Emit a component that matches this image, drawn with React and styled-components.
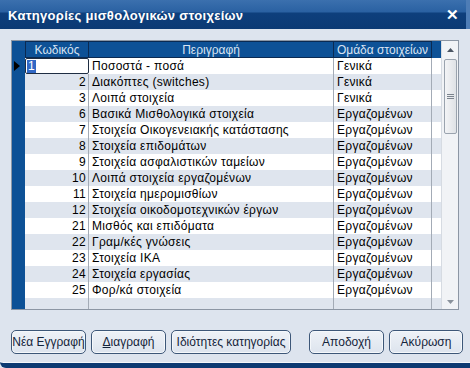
import React from "react";
import styled, { createGlobalStyle } from "styled-components";

const Global = createGlobalStyle`
  html, body { margin: 0; padding: 0; overflow: hidden; background: #dde4ee; }
  * { box-sizing: border-box; }
`;

const rows = [
  [1, "Ποσοστά - ποσά", "Γενικά"],
  [2, "Διακόπτες (switches)", "Γενικά"],
  [3, "Λοιπά στοιχεία", "Γενικά"],
  [6, "Βασικά Μισθολογικά στοιχεία", "Εργαζομένων"],
  [7, "Στοιχεία Οικογενειακής κατάστασης", "Εργαζομένων"],
  [8, "Στοιχεία επιδομάτων", "Εργαζομένων"],
  [9, "Στοιχεία ασφαλιστικών ταμείων", "Εργαζομένων"],
  [10, "Λοιπά στοιχεία εργαζομένων", "Εργαζομένων"],
  [11, "Στοιχεία ημερομισθίων", "Εργαζομένων"],
  [12, "Στοιχεία οικοδομοτεχνικών έργων", "Εργαζομένων"],
  [21, "Μισθός και επιδόματα", "Εργαζομένων"],
  [22, "Γραμ/κές γνώσεις", "Εργαζομένων"],
  [23, "Στοιχεία ΙΚΑ", "Εργαζομένων"],
  [24, "Στοιχεία εργασίας", "Εργαζομένων"],
  [25, "Φορ/κά στοιχεία", "Εργαζομένων"],
];

const COLS = "13px 64px 245px 98px 9px";
const FONT = `"Liberation Sans", Arial, sans-serif`;

const Window = styled.div`
  width: 470px;
  height: 368px;
  display: flex;
  flex-direction: column;
  background: #dde4ee;
  border-bottom: 5px solid #0c3a72;
  border-bottom-left-radius: 6px;
  box-shadow: inset 0 -1px 0 #f4f7fb;
  font-family: ${FONT};
  overflow: hidden;
`;

const TitleBar = styled.div`
  height: 29px;
  flex: none;
  display: flex;
  align-items: center;
  justify-content: space-between;
  padding: 0 7px 0 8px;
  background: linear-gradient(
    to bottom,
    #3b70ae 0px,
    #2a61a2 12px,
    #0e3f7c 13px,
    #0b3a74 29px
  );
  border-right: 4px solid #4e7db6;
  color: #ffffff;
  font-weight: bold;
  font-size: 13px;
  letter-spacing: 0.3px;
`;

const Title = styled.span`
  padding-top: 2px;
`;

const Close = styled.span`
  font-size: 15px;
  font-weight: bold;
  line-height: 1;
`;

const Body = styled.div`
  flex: 1;
  display: flex;
  flex-direction: column;
  padding: 11px 11px 0 11px;
`;

const Grid = styled.div`
  width: 448px;
  height: 270px;
  border: 1px solid #8c96a4;
  display: flex;
  background: #ffffff;
`;

const Table = styled.div`
  flex: 1;
  display: flex;
  flex-direction: column;
  overflow: hidden;
`;

const Row = styled.div`
  display: grid;
  grid-template-columns: ${COLS};
  height: ${(p) => (p.$header ? 17 : 16)}px;
  flex: none;
  background: ${(p) => (p.$header ? "#0d5196" : p.$alt ? "#dfe5ee" : "#ffffff")};
  font-size: 12px;
  letter-spacing: ${(p) => (p.$header ? 0 : 0.3)}px;
  line-height: 16px;
`;

const Indicator = styled.div`
  background: #0d5196;
  position: relative;
`;

const Arrow = styled.div`
  position: absolute;
  left: 2px;
  top: 3px;
  width: 0;
  height: 0;
  border-top: 5px solid transparent;
  border-bottom: 5px solid transparent;
  border-left: 6px solid #000;
`;

const HeadCell = styled.div`
  color: #d9e4f3;
  text-align: center;
  border-left: ${(p) => (p.$first ? "1px solid #0a2a52" : "none")};
  border-right: 1px solid #0a2a52;
  border-top: 1px solid #0a2a52;
  border-bottom: 1px solid #0a2a52;
  white-space: nowrap;
  overflow: hidden;
`;

const HeadFill = styled.div`
  background: #0d5196;
`;

const Cell = styled.div`
  color: #000;
  text-align: ${(p) => (p.$right ? "right" : "left")};
  padding: ${(p) => (p.$right ? "0 2px 0 0" : "0 0 0 3px")};
  border-right: 1px solid #a3abb6;
  white-space: nowrap;
  overflow: hidden;
`;

const EditCell = styled.div`
  background: #ffffff;
  border: 1px solid #1e2d42;
  border-radius: 2px;
  padding: 0 0 0 1px;
  display: flex;
  align-items: center;
`;

const Sel = styled.span`
  background: #3168c5;
  color: #fff;
  padding: 0 1px;
  line-height: 13px;
`;

const Filler = styled.div``;

const EmptyRow = styled(Row)`
  height: 11px;
  background: #dfe5ee;
`;

const Rest = styled.div`
  flex: 1;
  background: linear-gradient(to right, #0d5196 13px, #ffffff 13px);
`;

const Scroll = styled.div`
  width: 17px;
  flex: none;
  background: #f1f3f6;
  border-left: 1px solid #d6dbe2;
  display: flex;
  flex-direction: column;
  align-items: center;
  padding-top: 1px;
`;

const ArrowBtn = styled.div`
  width: 15px;
  height: 15px;
  display: flex;
  align-items: center;
  justify-content: center;
`;

const Thumb = styled.div`
  width: 13px;
  height: 75px;
  margin-top: 2px;
  border: 1px solid #9aa3ae;
  border-radius: 2px;
  background: linear-gradient(to right, #f3f4f6, #dfe2e6);
  display: flex;
  align-items: center;
  justify-content: center;
`;

const Track = styled.div`
  flex: 1;
`;

const Buttons = styled.div`
  display: flex;
  justify-content: space-between;
  margin-top: 20px;
  margin-right: -4px;
`;

const Group = styled.div`
  display: flex;
  gap: 5px;
`;

const Button = styled.button`
  width: ${(p) => p.$w || 75}px;
  height: 24px;
  padding: 0;
  border: 1px solid #3d5778;
  border-radius: 5px;
  background: linear-gradient(to bottom, #eef2f7, #dde4ee);
  box-shadow: inset 0 0 0 1px #f5f8fb;
  color: #14243a;
  font-family: ${FONT};
  font-size: 12px;
  white-space: nowrap;
`;

const U = styled.span`
  text-decoration: underline;
`;

function TriUp() {
  return (
    <svg width="7" height="4" viewBox="0 0 7 4">
      <path d="M0 4 L3.5 0 L7 4 Z" fill="#4b5563" />
    </svg>
  );
}
function TriDown() {
  return (
    <svg width="7" height="4" viewBox="0 0 7 4">
      <path d="M0 0 L3.5 4 L7 0 Z" fill="#8a929c" />
    </svg>
  );
}
function Grip() {
  return (
    <svg width="7" height="6" viewBox="0 0 7 6">
      <path d="M0 0.5H7M0 2.5H7M0 4.5H7" stroke="#7b838d" strokeWidth="1" />
    </svg>
  );
}

export default function App() {
  return (
    <>
      <Global />
      <Window>
        <TitleBar>
          <Title>Κατηγορίες μισθολογικών στοιχείων</Title>
          <Close>✕</Close>
        </TitleBar>
        <Body>
          <Grid>
            <Table>
              <Row $header>
                <HeadFill />
                <HeadCell $first>Κωδικός</HeadCell>
                <HeadCell>Περιγραφή</HeadCell>
                <HeadCell>Ομάδα στοιχείων</HeadCell>
                <HeadFill />
              </Row>
              {rows.map(([code, desc, group], i) => (
                <Row key={code} $alt={i % 2 === 1}>
                  <Indicator>{i === 0 && <Arrow />}</Indicator>
                  {i === 0 ? (
                    <EditCell>
                      <Sel>{code}</Sel>
                    </EditCell>
                  ) : (
                    <Cell $right>{code}</Cell>
                  )}
                  <Cell>{desc}</Cell>
                  <Cell>{group}</Cell>
                  <Filler />
                </Row>
              ))}
              <EmptyRow>
                <Indicator />
                <Cell />
                <Cell />
                <Cell />
                <Filler />
              </EmptyRow>
              <Rest />
            </Table>
            <Scroll>
              <ArrowBtn>
                <TriUp />
              </ArrowBtn>
              <Thumb>
                <Grip />
              </Thumb>
              <Track />
              <ArrowBtn>
                <TriDown />
              </ArrowBtn>
            </Scroll>
          </Grid>
          <Buttons>
            <Group>
              <Button>Νέα Εγγραφή</Button>
              <Button>
                <U>Δ</U>ιαγραφή
              </Button>
              <Button $w={120}>Ιδιότητες κατηγορίας</Button>
            </Group>
            <Group>
              <Button>Αποδοχή</Button>
              <Button $w={74}>Ακύρωση</Button>
            </Group>
          </Buttons>
        </Body>
      </Window>
    </>
  );
}
